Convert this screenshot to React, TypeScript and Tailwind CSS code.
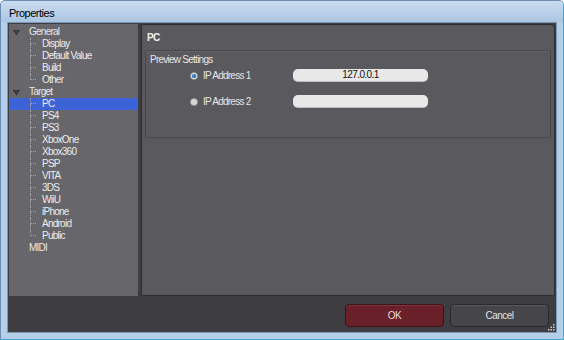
const font = { fontFamily: '"Liberation Sans", Arial, sans-serif' };

type Node = { label: string; children?: string[] };

const tree: Node[] = [
  { label: "General", children: ["Display", "Default Value", "Build", "Other"] },
  {
    label: "Target",
    children: ["PC", "PS4", "PS3", "XboxOne", "Xbox360", "PSP", "VITA", "3DS", "WiiU", "iPhone", "Android", "Public"],
  },
  { label: "MIDI" },
];

function Expander() {
  return (
    <svg width="7" height="7" viewBox="0 0 7 7" className="block">
      <polygon points="0,1 7,1 3.5,6.5" fill="#2f2e33" />
      <polygon points="1.5,1.8 5.5,1.8 3.5,4.8" fill="#4a494e" />
    </svg>
  );
}

function ParentRow({ label, expandable }: { label: string; expandable: boolean }) {
  return (
    <div className="flex h-[12px] items-center">
      <div className="flex w-[20px] items-center pl-[4px]">{expandable && <Expander />}</div>
      <span className="text-[10px] leading-none tracking-[-0.75px] text-[#e6e6e6]">{label}</span>
    </div>
  );
}

function ChildRow({ label, last, selected }: { label: string; last: boolean; selected: boolean }) {
  return (
    <div className={`flex h-[12px] items-center ${selected ? "bg-[#3d63d9]" : ""}`}>
      <div className="w-[21px]" />
      <div className="flex h-[12px] w-[6px] flex-col">
        <div className="h-[6px] border-b border-l border-dotted border-[#a09fa4]" />
        <div className={`h-[6px] ${last ? "" : "border-l border-dotted border-[#a09fa4]"}`} />
      </div>
      <span className="ml-[6px] text-[10px] leading-none tracking-[-0.75px] text-[#ececec]">{label}</span>
    </div>
  );
}

function Radio({ checked }: { checked: boolean }) {
  return (
    <svg width="8" height="8" viewBox="0 0 8 8" className="block">
      <circle cx="4" cy="4" r="3.6" fill={checked ? "#dcdcdc" : "#d6d6d6"} stroke="#8c8b90" strokeWidth="0.6" />
      {checked && <circle cx="4" cy="4" r="2.1" fill="#1f6fb8" />}
      {checked && <circle cx="3.5" cy="3.4" r="0.8" fill="#6fb3ea" />}
    </svg>
  );
}

function AddressRow({ label, value, checked, className }: { label: string; value: string; checked: boolean; className: string }) {
  return (
    <div className={`flex h-[13px] items-center ${className}`}>
      <div className="w-[44px]" />
      <Radio checked={checked} />
      <span className="ml-[5px] w-[90px] text-[10px] leading-none tracking-[-0.75px] text-[#e6e6e6]">{label}</span>
      <div className="flex h-[13px] w-[135px] items-center justify-center rounded-[5px] border-b border-[#bdbdbd] bg-[#e8e8e8] text-[10px] leading-none tracking-[-0.6px] text-[#111]">
        {value}
      </div>
    </div>
  );
}

export default function App() {
  return (
    <div
      style={font}
      className="flex h-[340px] w-[564px] flex-col overflow-hidden rounded-t-[5px] border border-[#6f8db0] border-b-[#3ea6cf] border-r-[#3ea6cf] bg-[#b6cfe8]"
    >
      <div className="flex h-[21px] shrink-0 items-end bg-gradient-to-b from-[#c9dcef] to-[#abc6e3] pb-[3px] pl-[8px]">
        <span className="text-[11px] leading-none tracking-[-0.5px] text-black">Properties</span>
      </div>

      <div className="mx-[6px] mb-[6px] flex flex-1 flex-col border border-[#7c96b5] bg-[#3e3d42]">
        <div className="flex h-[273px] gap-[3px] pl-[1px] pr-[1px] pt-[1px]">
          <div className="w-[129px] bg-[#67666b] pt-[2px]">
            {tree.map((node) => (
              <div key={node.label}>
                <ParentRow label={node.label} expandable={!!node.children} />
                {node.children?.map((c, i) => (
                  <ChildRow key={c} label={c} last={i === node.children!.length - 1} selected={c === "PC"} />
                ))}
              </div>
            ))}
          </div>

          <div className="flex flex-1 flex-col rounded-tr-[4px] border border-[#2f2e33] bg-[#5a595e] px-[3px]">
            <div className="flex h-[25px] items-center pl-[2px]">
              <span className="text-[10px] font-bold leading-none tracking-[-0.7px] text-[#f2f2f2]">PC</span>
            </div>
            <div className="h-[88px] rounded-[2px] border border-[#48474c] shadow-[inset_0_1px_0_#646368]">
              <div className="flex h-[14px] items-end pl-[4px]">
                <span className="text-[10px] leading-none tracking-[-0.75px] text-[#e6e6e6]">Preview Settings</span>
              </div>
              <AddressRow label="IP Address 1" value="127.0.0.1" checked className="mt-[4px]" />
              <AddressRow label="IP Address 2" value="" checked={false} className="mt-[13px]" />
            </div>
          </div>
        </div>

        <div className="relative flex flex-1 items-start justify-end gap-[6px] pr-[7px] pt-[8px]">
          <button className="h-[23px] w-[99px] rounded-[4px] border border-[#3a1317] bg-[#6a2029] text-[10px] tracking-[-0.5px] text-[#e8dede] shadow-[inset_0_1px_0_#82343d]">
            OK
          </button>
          <button className="h-[23px] w-[99px] rounded-[4px] border border-[#29282b] bg-[#464548] text-[10px] tracking-[-0.5px] text-[#e2e2e2] shadow-[inset_0_1px_0_#5a595c]">
            Cancel
          </button>
          <svg width="7" height="7" viewBox="0 0 7 7" className="absolute bottom-[1px] right-[1px]">
            <rect x="5" y="0" width="1.5" height="1.5" fill="#d0d0d0" />
            <rect x="2.5" y="2.5" width="1.5" height="1.5" fill="#d0d0d0" />
            <rect x="5" y="2.5" width="1.5" height="1.5" fill="#d0d0d0" />
            <rect x="0" y="5" width="1.5" height="1.5" fill="#d0d0d0" />
            <rect x="2.5" y="5" width="1.5" height="1.5" fill="#d0d0d0" />
            <rect x="5" y="5" width="1.5" height="1.5" fill="#d0d0d0" />
          </svg>
        </div>
      </div>
    </div>
  );
}
